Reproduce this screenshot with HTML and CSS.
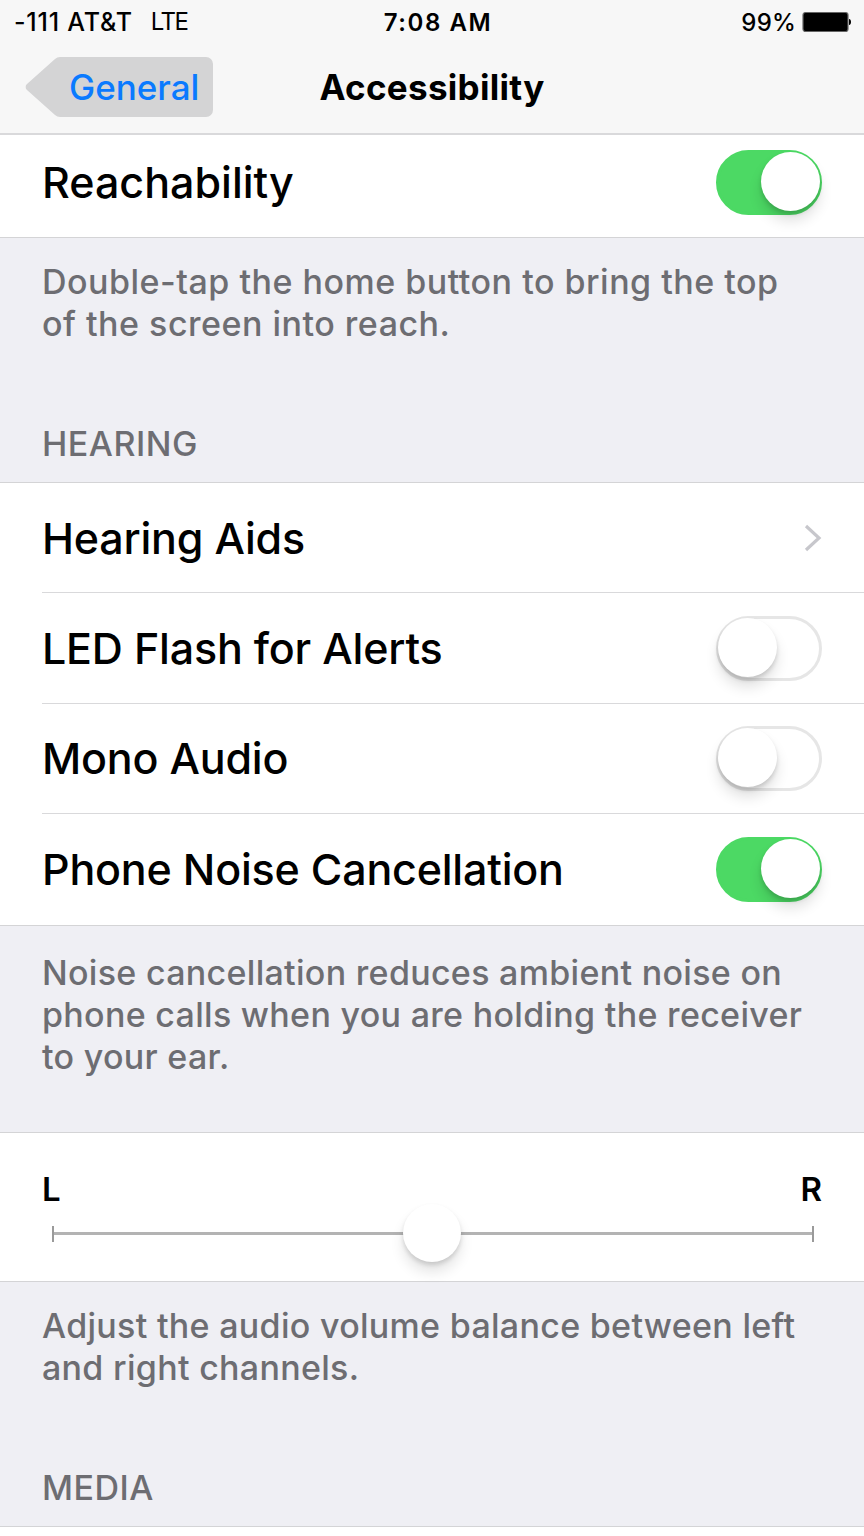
FILE: index.html
```html
<!DOCTYPE html>
<html lang="en">
<head>
<meta charset="utf-8">
<title>Accessibility</title>
<link rel="stylesheet" href="styles.css">
</head>
<body>
<header class="top">
  <div class="status">
    <div class="status-left"><span class="carrier">-111 AT&amp;T</span><span class="lte">LTE</span></div>
    <div class="status-time">7:08 AM</div>
    <div class="status-right"><span class="pct">99%</span>
      <svg class="battery" width="50" height="22" viewBox="0 0 50 22"><rect x="1" y="1.5" width="45" height="19" rx="2.5" fill="#000" stroke="#666" stroke-width="1.2"/><path d="M47 8 c1.500 0 2 1.500 2 3 s-.5 3-2 3z" fill="#000"/></svg>
    </div>
  </div>
  <nav class="nav">
    <div class="back">
      <svg class="back-shape" width="190" height="62" viewBox="0 0 190 62"><path d="M36 1 H182 a7 7 0 0 1 7 7 V54 a7 7 0 0 1-7 7 H36 a8 8 0 0 1-5-2 L3 34 a4 4 0 0 1 0-6 L31 3 a8 8 0 0 1 5-2z" fill="#d4d4d5"/></svg>
      <span class="back-label">General</span>
    </div>
    <h1 class="title">Accessibility</h1>
  </nav>
</header>

<section class="group group-first">
  <div class="row row-short"><span class="row-label">Reachability</span><span class="switch on"><i class="knob"></i></span></div>
</section>
<p class="note note-a">Double-tap the home button to bring the top of the screen into reach.</p>
<h2 class="section-head head-a">HEARING</h2>

<section class="group">
  <div class="row"><span class="row-label">Hearing Aids</span>
    <svg class="chevron" width="18" height="28" viewBox="0 0 18 28"><path d="M2 2 L15 14 L2 26" fill="none" stroke="#c7c7cc" stroke-width="3.200"/></svg>
  </div>
  <div class="row"><span class="row-label">LED Flash for Alerts</span><span class="switch"><i class="knob"></i></span></div>
  <div class="row"><span class="row-label">Mono Audio</span><span class="switch"><i class="knob"></i></span></div>
  <div class="row"><span class="row-label">Phone Noise Cancellation</span><span class="switch on"><i class="knob"></i></span></div>
</section>
<p class="note note-b">Noise cancellation reduces ambient noise on phone calls when you are holding the receiver to your ear.</p>

<section class="group balance">
  <div class="balance-labels"><span>L</span><span>R</span></div>
  <div class="slider"><span class="tick"></span><span class="track"></span><span class="tick"></span><i class="slider-knob"></i></div>
</section>
<p class="note note-c">Adjust the audio volume balance between left and right channels.</p>
<h2 class="section-head head-c">MEDIA</h2>
<div class="group tail"></div>
</body>
</html>
```
FILE: styles.css
```css
* { box-sizing: border-box; }
html, body { margin: 0; padding: 0; }
body {
  width: 864px;
  height: 1536px;
  overflow: hidden;
  background: #efeff4;
  font-family: Inter, "Liberation Sans", sans-serif;
  color: #000;
}
.top { height: 135px; background: #f7f7f7; border-bottom: 2px solid #d9d9db; }
.status {
  height: 44px;
  display: grid;
  grid-template-columns: 1fr auto 1fr;
  align-items: center;
  padding: 0 12px 0 14px;
  font-size: 24px;
}
.status-left { display: flex; gap: 18px; font-weight: 500; font-size: 25px; letter-spacing: 0.8px; }
.lte { font-weight: 400; font-size: 24px; letter-spacing: -1.5px; }
.status-time { margin-left: 10px; font-weight: 600; font-size: 24px; letter-spacing: 1.6px; }
.status-right { display: flex; justify-content: flex-end; align-items: center; gap: 6px; font-weight: 500; }
.pct { letter-spacing: 0.2px; }
.nav { position: relative; height: 88px; }
.back { position: absolute; left: 24px; top: 12px; width: 190px; height: 62px; }
.back-shape { display: block; }
.back-label {
  position: absolute;
  left: 45px;
  top: 11px;
  font-size: 35px;
  line-height: 40px;
  color: #0a7aff;
  font-weight: 500;
}
.title {
  margin: 0;
  text-align: center;
  font-size: 35px;
  font-weight: 700;
  letter-spacing: 0.3px;
  line-height: 86px;
}
.group { background: #fff; border-top: 1px solid #d4d4d6; border-bottom: 1px solid #d4d4d6; }
.group-first { border-top: 0; }
.row {
  position: relative;
  height: 110.4px;
  display: flex;
  align-items: center;
  justify-content: space-between;
  padding: 0 42px;
}
.row + .row::before {
  content: "";
  position: absolute;
  left: 42px;
  right: 0;
  top: -1px;
  height: 1px;
  background: #d9d9db;
}
.row-short { height: 102px; padding-bottom: 8px; }
.row-label { font-size: 43px; font-weight: 500; letter-spacing: -0.2px; margin-bottom: 1px; }
.row-short .row-label { margin-bottom: 0; letter-spacing: 0; }
.chevron { display: block; }
.switch {
  position: relative;
  width: 106px;
  height: 65px;
  border-radius: 33px;
  border: 3px solid #e6e6e6;
  background: #fff;
  display: block;
}
.switch.on { background: #4cd964; border-color: #4cd964; }
.knob {
  position: absolute;
  left: -1px;
  top: -1px;
  width: 59px;
  height: 59px;
  border-radius: 50%;
  background: #fff;
  box-shadow: 0 10px 14px rgba(0,0,0,.12), 0 3px 4px rgba(0,0,0,.14);
}
.switch.on .knob { left: auto; right: -1px; }
.note {
  margin: 0;
  padding: 0 59px 0 42px;
  font-size: 34px;
  line-height: 42px;
  letter-spacing: 0.3px;
  color: #6d6d72;
  font-weight: 500;
}
.note-a { padding-top: 23px; letter-spacing: 0.5px; }
.section-head {
  margin: 0;
  padding: 0 42px;
  font-size: 34px;
  line-height: 40px;
  letter-spacing: 0.5px;
  font-weight: 500;
  color: #6d6d72;
}
.head-a { padding-top: 79px; margin-bottom: 18px; }
.note-b { padding-top: 26px; padding-bottom: 54px; }
.balance { height: 150px; padding: 0 42px; }
.balance-labels { display: flex; justify-content: space-between; font-size: 33px; font-weight: 600; line-height: 40px; padding-top: 36px; }
.slider { position: relative; display: flex; align-items: center; height: 16px; margin: 17px 8px 0 10px; }
.track { flex: 1; height: 3px; background: #b3b3b3; }
.tick { width: 2px; height: 16px; background: #9a9a9a; }
.slider-knob {
  position: absolute;
  left: 351px;
  top: -22px;
  width: 58px;
  height: 58px;
  border-radius: 50%;
  background: #fff;
  box-shadow: 0 10px 14px rgba(0,0,0,.11), 0 3px 4px rgba(0,0,0,.13);
}
.note-c { padding-top: 23px; }
.head-c { padding-top: 79px; margin-bottom: 18px; }
.tail { height: 20px; border-bottom: 0; }
```
